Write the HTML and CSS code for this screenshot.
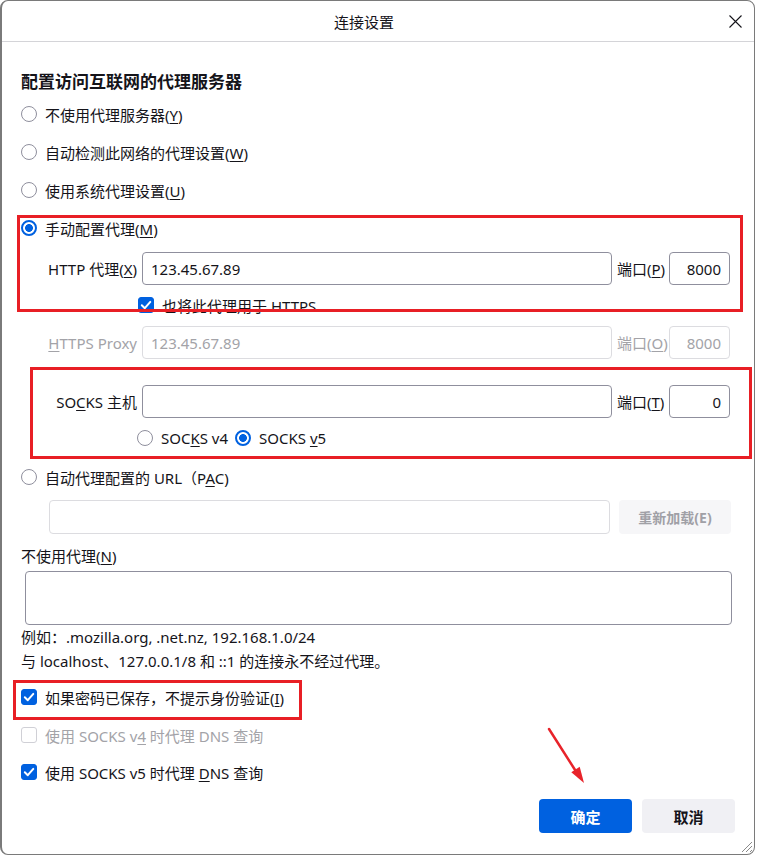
FILE: index.html
```html
<!DOCTYPE html>
<html lang="zh-CN">
<head>
  <meta charset="utf-8">
  <link rel="stylesheet" href="styles.css">
</head>
<body>
  <div class="window">
    <div class="titlebar">
      <span class="title">连接设置</span>
      <span class="close">
        <svg width="13" height="13" viewBox="0 0 13 13"><path d="M0.5 0.5 L12.5 12.5 M12.5 0.5 L0.5 12.5" stroke="#15141a" stroke-width="1.1" fill="none"/></svg>
      </span>
    </div>

    <div class="content">
      <h1 class="heading">配置访问互联网的代理服务器</h1>

      <div class="opt"><span class="radio"></span><span>不使用代理服务器(<u>Y</u>)</span></div>
      <div class="opt"><span class="radio"></span><span>自动检测此网络的代理设置(<u>W</u>)</span></div>
      <div class="opt"><span class="radio"></span><span>使用系统代理设置(<u>U</u>)</span></div>
      <div class="opt"><span class="radio checked"></span><span>手动配置代理(<u>M</u>)</span></div>

      <div class="proxy-row row-http">
        <span class="proxy-label">HTTP 代理(<u>X</u>)</span>
        <input class="field" type="text" value="123.45.67.89">
        <span class="port-label">端口(<u>P</u>)</span>
        <input class="field port" type="text" value="8000">
      </div>

      <div class="opt opt-tall indent">
        <span class="check checked">
          <svg width="16" height="16" viewBox="0 0 16 16"><path d="M3.8 8.3 L6.8 11.2 L12.3 4.9" stroke="#fff" stroke-width="2" fill="none" stroke-linecap="round" stroke-linejoin="round"/></svg>
        </span>
        <span>也将此代理用于 HTTPS</span>
      </div>

      <div class="proxy-row row-https disabled">
        <span class="proxy-label"><u>H</u>TTPS Proxy</span>
        <input class="field" type="text" value="123.45.67.89" disabled>
        <span class="port-label">端口(<u>O</u>)</span>
        <input class="field port" type="text" value="8000" disabled>
      </div>

      <div class="proxy-row row-socks">
        <span class="proxy-label">SO<u>C</u>KS 主机</span>
        <input class="field" type="text" value="">
        <span class="port-label">端口(<u>T</u>)</span>
        <input class="field port" type="text" value="0">
      </div>

      <div class="opt opt-tall indent socks-version">
        <span class="radio"></span><span>SOC<u>K</u>S v4</span>
        <span class="radio checked"></span><span>SOCKS <u>v</u>5</span>
      </div>

      <div class="opt"><span class="radio"></span><span>自动代理配置的 URL（P<u>A</u>C)</span></div>

      <div class="pac-row">
        <input class="field pac" type="text" value="" disabled>
        <button class="btn-reload" disabled>重新加载(E)</button>
      </div>

      <div class="text-line no-proxy">不使用代理(<u>N</u>)</div>
      <textarea class="no-proxy-box"></textarea>
      <div class="text-line">例如：.mozilla.org, .net.nz, 192.168.1.0/24</div>
      <div class="text-line">与 localhost、127.0.0.1/8 和 ::1 的连接永不经过代理。</div>

      <div class="opt pw-row">
        <span class="check checked">
          <svg width="16" height="16" viewBox="0 0 16 16"><path d="M3.8 8.3 L6.8 11.2 L12.3 4.9" stroke="#fff" stroke-width="2" fill="none" stroke-linecap="round" stroke-linejoin="round"/></svg>
        </span>
        <span>如果密码已保存，不提示身份验证(<u>I</u>)</span>
      </div>
      <div class="opt disabled"><span class="check"></span><span>使用 SOCKS v<u>4</u> 时代理 DNS 查询</span></div>
      <div class="opt opt-last">
        <span class="check checked">
          <svg width="16" height="16" viewBox="0 0 16 16"><path d="M3.8 8.3 L6.8 11.2 L12.3 4.9" stroke="#fff" stroke-width="2" fill="none" stroke-linecap="round" stroke-linejoin="round"/></svg>
        </span>
        <span>使用 SOCKS v5 时代理 <u>D</u>NS 查询</span>
      </div>

      <div class="actions">
        <button class="btn btn-primary">确定</button>
        <button class="btn">取消</button>
      </div>
    </div>

    <!-- annotations drawn over the dialog -->
    <div class="mark mark-manual"></div>
    <div class="mark mark-socks"></div>
    <div class="mark mark-password"></div>
    <svg class="arrow" width="60" height="70" viewBox="540 722 60 70">
      <line x1="548" y1="729" x2="576" y2="773" stroke="#e8232a" stroke-width="2.5" stroke-linecap="round"/>
      <polygon points="583,783 570.3,772.2 578.7,766.8" fill="#e8232a"/>
    </svg>
    <svg class="grip" width="14" height="14" viewBox="0 0 14 14">
      <path d="M13 3 L3 13 M13 7 L7 13 M13 11 L11 13" stroke="#8a8a8a" stroke-width="1" fill="none"/>
    </svg>
  </div>
</body>
</html>
```

FILE: styles.css
```css
body {
  margin: 0;
  background: #fff;
  font-family: "Segoe UI", "Noto Sans", "Noto Sans CJK SC", sans-serif;
  font-size: 15px;
  color: #15141a;
}

.window {
  position: relative;
  width: 755px;
  height: 855px;
  box-sizing: border-box;
  border: 1px solid #7a7a7a;
  border-left-width: 2px;
  border-radius: 8px;
  overflow: hidden;
  background: #fff;
}

.titlebar {
  display: flex;
  align-items: center;
  justify-content: center;
  height: 40px;
  border-bottom: 1px solid #d4d4d8;
  position: relative;
}

.title {
  font-size: 15px;
  margin-right: 28px;
}

.close {
  position: absolute;
  right: 12px;
  top: 14px;
  line-height: 0;
}

.content {
  padding: 0 22px 0 19px;
}

.heading {
  margin: 27px 0 0;
  height: 26px;
  line-height: 26px;
  font-size: 17px;
  font-weight: bold;
}

u {
  text-underline-offset: 2px;
}

.opt {
  display: flex;
  align-items: center;
  height: 38px;
  white-space: nowrap;
}

.opt-tall {
  height: 40px;
}

.opt-last {
  height: 36px;
}

.indent {
  padding-left: 117px;
}

.socks-version {
  padding-left: 116px;
}

.socks-version .radio + span {
  margin-right: 7px;
}

.radio {
  width: 16px;
  height: 16px;
  box-sizing: border-box;
  border: 1px solid #8f8f9d;
  border-radius: 50%;
  margin-right: 8px;
  flex: none;
}

.radio.checked {
  border: 2px solid #0061e0;
  background: radial-gradient(circle, #0061e0 0 3.6px, #fff 4.2px);
}

.check {
  width: 16px;
  height: 16px;
  box-sizing: border-box;
  border: 1px solid #8f8f9d;
  border-radius: 3px;
  margin-right: 8px;
  flex: none;
  line-height: 0;
}

.check.checked {
  background: #0061e0;
  border-color: #0061e0;
}

.check svg {
  margin: -1px;
}

.disabled {
  color: #a3a3a8;
}

.opt.disabled .check {
  border-color: #d0d0d6;
}

.proxy-row {
  display: grid;
  grid-template-columns: 116px 470px 47px 61px;
  column-gap: 5px;
  align-items: center;
  height: 33px;
  white-space: nowrap;
}

.row-http {
  margin-top: 5px;
}

.row-https {
  margin-top: 1px;
}

.row-socks {
  margin-top: 26px;
}

.proxy-label {
  text-align: right;
}

.port-label {
  margin-right: 2px;
}

.field {
  height: 33px;
  box-sizing: border-box;
  border: 1px solid #8f8f9d;
  border-radius: 4px;
  padding: 0 8px;
  font: inherit;
  color: #15141a;
  background: #fff;
  width: 100%;
  outline: none;
}

.field.port {
  text-align: right;
}

.field:disabled {
  border-color: #dcdce0;
  color: #a3a3a8;
  background: #fff;
}

.pac-row {
  display: flex;
  margin-top: 4px;
  height: 34px;
  padding-left: 28px;
  gap: 9px;
}

.field.pac {
  width: 561px;
  height: 34px;
}

.btn-reload {
  width: 112px;
  height: 34px;
  border: none;
  border-radius: 4px;
  background: #f6f6f8;
  color: #a0a0a6;
  font: inherit;
  font-size: 14px;
  font-weight: bold;
}

.text-line {
  height: 24px;
  line-height: 24px;
  white-space: nowrap;
}

.no-proxy {
  margin-top: 10px;
}

.no-proxy-box {
  display: block;
  margin: 3px 0 0 4px;
  width: 707px;
  height: 54px;
  box-sizing: border-box;
  border: 1px solid #8f8f9d;
  border-radius: 4px;
  resize: none;
  font: inherit;
}

.pw-row {
  margin-top: 5px;
}

.actions {
  display: flex;
  justify-content: flex-end;
  gap: 10px;
  margin: 9px -3px 0 0;
}

.btn {
  width: 93px;
  height: 34px;
  border: none;
  border-radius: 4px;
  background: #f0f0f4;
  color: #15141a;
  font: inherit;
  font-size: 15px;
  font-weight: bold;
}

.btn-primary {
  background: #0061e0;
  color: #fff;
}

.mark {
  position: absolute;
  border: 3px solid #e81f25;
  box-sizing: border-box;
}

.mark-manual {
  left: 15px;
  top: 214px;
  width: 726px;
  height: 97px;
}

.mark-socks {
  left: 28px;
  top: 366px;
  width: 722px;
  height: 92px;
}

.mark-password {
  left: 11px;
  top: 679px;
  width: 289px;
  height: 40px;
}

.arrow {
  position: absolute;
  left: 539px;
  top: 721px;
}

.grip {
  position: absolute;
  right: 1px;
  bottom: 1px;
}
```
